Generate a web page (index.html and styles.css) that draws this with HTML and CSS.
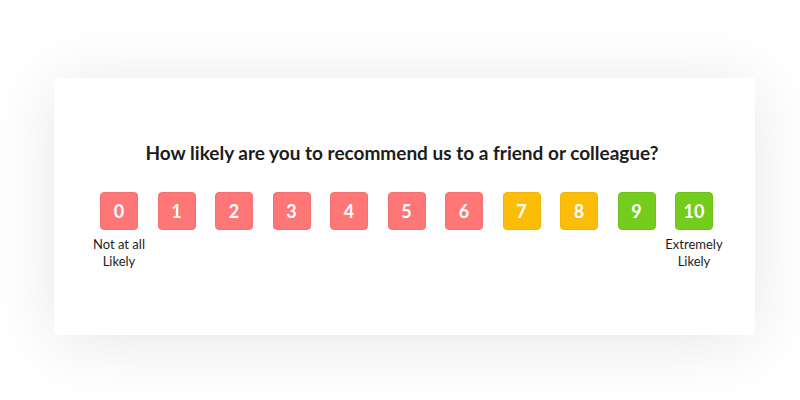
FILE: index.html
```html
<!DOCTYPE html>
<html lang="en">
  <head>
    <meta charset="UTF-8" />
    <meta name="viewport" content="width=device-width, initial-scale=1.0" />
    <title>NPS Survey</title>
    <link rel="stylesheet" href="styles.css">
  </head>
  <body>
    <div class="survey">
      <h1>How likely are you to recommend us to a friend or colleague?</h1>
      <div class="scale">
        <div class="item"><span class="score red">0</span><span class="label">Not at all<br>Likely</span></div>
        <div class="item"><span class="score red">1</span></div>
        <div class="item"><span class="score red">2</span></div>
        <div class="item"><span class="score red">3</span></div>
        <div class="item"><span class="score red">4</span></div>
        <div class="item"><span class="score red">5</span></div>
        <div class="item"><span class="score red">6</span></div>
        <div class="item"><span class="score yellow">7</span></div>
        <div class="item"><span class="score yellow">8</span></div>
        <div class="item"><span class="score green">9</span></div>
        <div class="item"><span class="score green">10</span><span class="label">Extremely<br>Likely</span></div>
      </div>
    </div>
  </body>
</html>
```

FILE: styles.css
```css
body {
  font-family: Lato, "Open Sans", sans-serif;
  background-color: #ffffff;
  margin: 0;
  padding: 78px 0 0 54px;
  min-height: 400px;
  box-sizing: border-box;
  overflow: hidden;
}

.survey {
  width: 701px;
  height: 257px;
  box-sizing: border-box;
  background-color: #ffffff;
  border-radius: 2px;
  padding-top: 63px;
  box-shadow: 0 6px 70px rgba(0, 0, 0, 0.1);
}

h1 {
  margin: 0;
  padding-right: 5px;
  font-size: 19px;
  line-height: 24px;
  font-weight: 700;
  color: #1c1c1c;
  text-align: center;
}

.scale {
  display: flex;
  gap: 19.5px;
  margin: 27px 0 0 46px;
}

.item {
  width: 38px;
  display: flex;
  flex-direction: column;
  align-items: center;
}

.score {
  width: 38px;
  height: 38px;
  box-sizing: border-box;
  border-radius: 4px;
  display: flex;
  align-items: center;
  justify-content: center;
  color: #ffffff;
  font-size: 18px;
  font-weight: 700;
}

.red {
  background-color: #ff7676;
  border: 1px solid #f57070;
}

.yellow {
  background-color: #fbbd08;
  border: 1px solid #f2b607;
}

.green {
  background-color: #74cc1c;
  border: 1px solid #6cc218;
}

.label {
  width: 90px;
  margin-top: 6px;
  font-size: 13px;
  line-height: 17px;
  color: #1c1c1c;
  text-align: center;
}
```
